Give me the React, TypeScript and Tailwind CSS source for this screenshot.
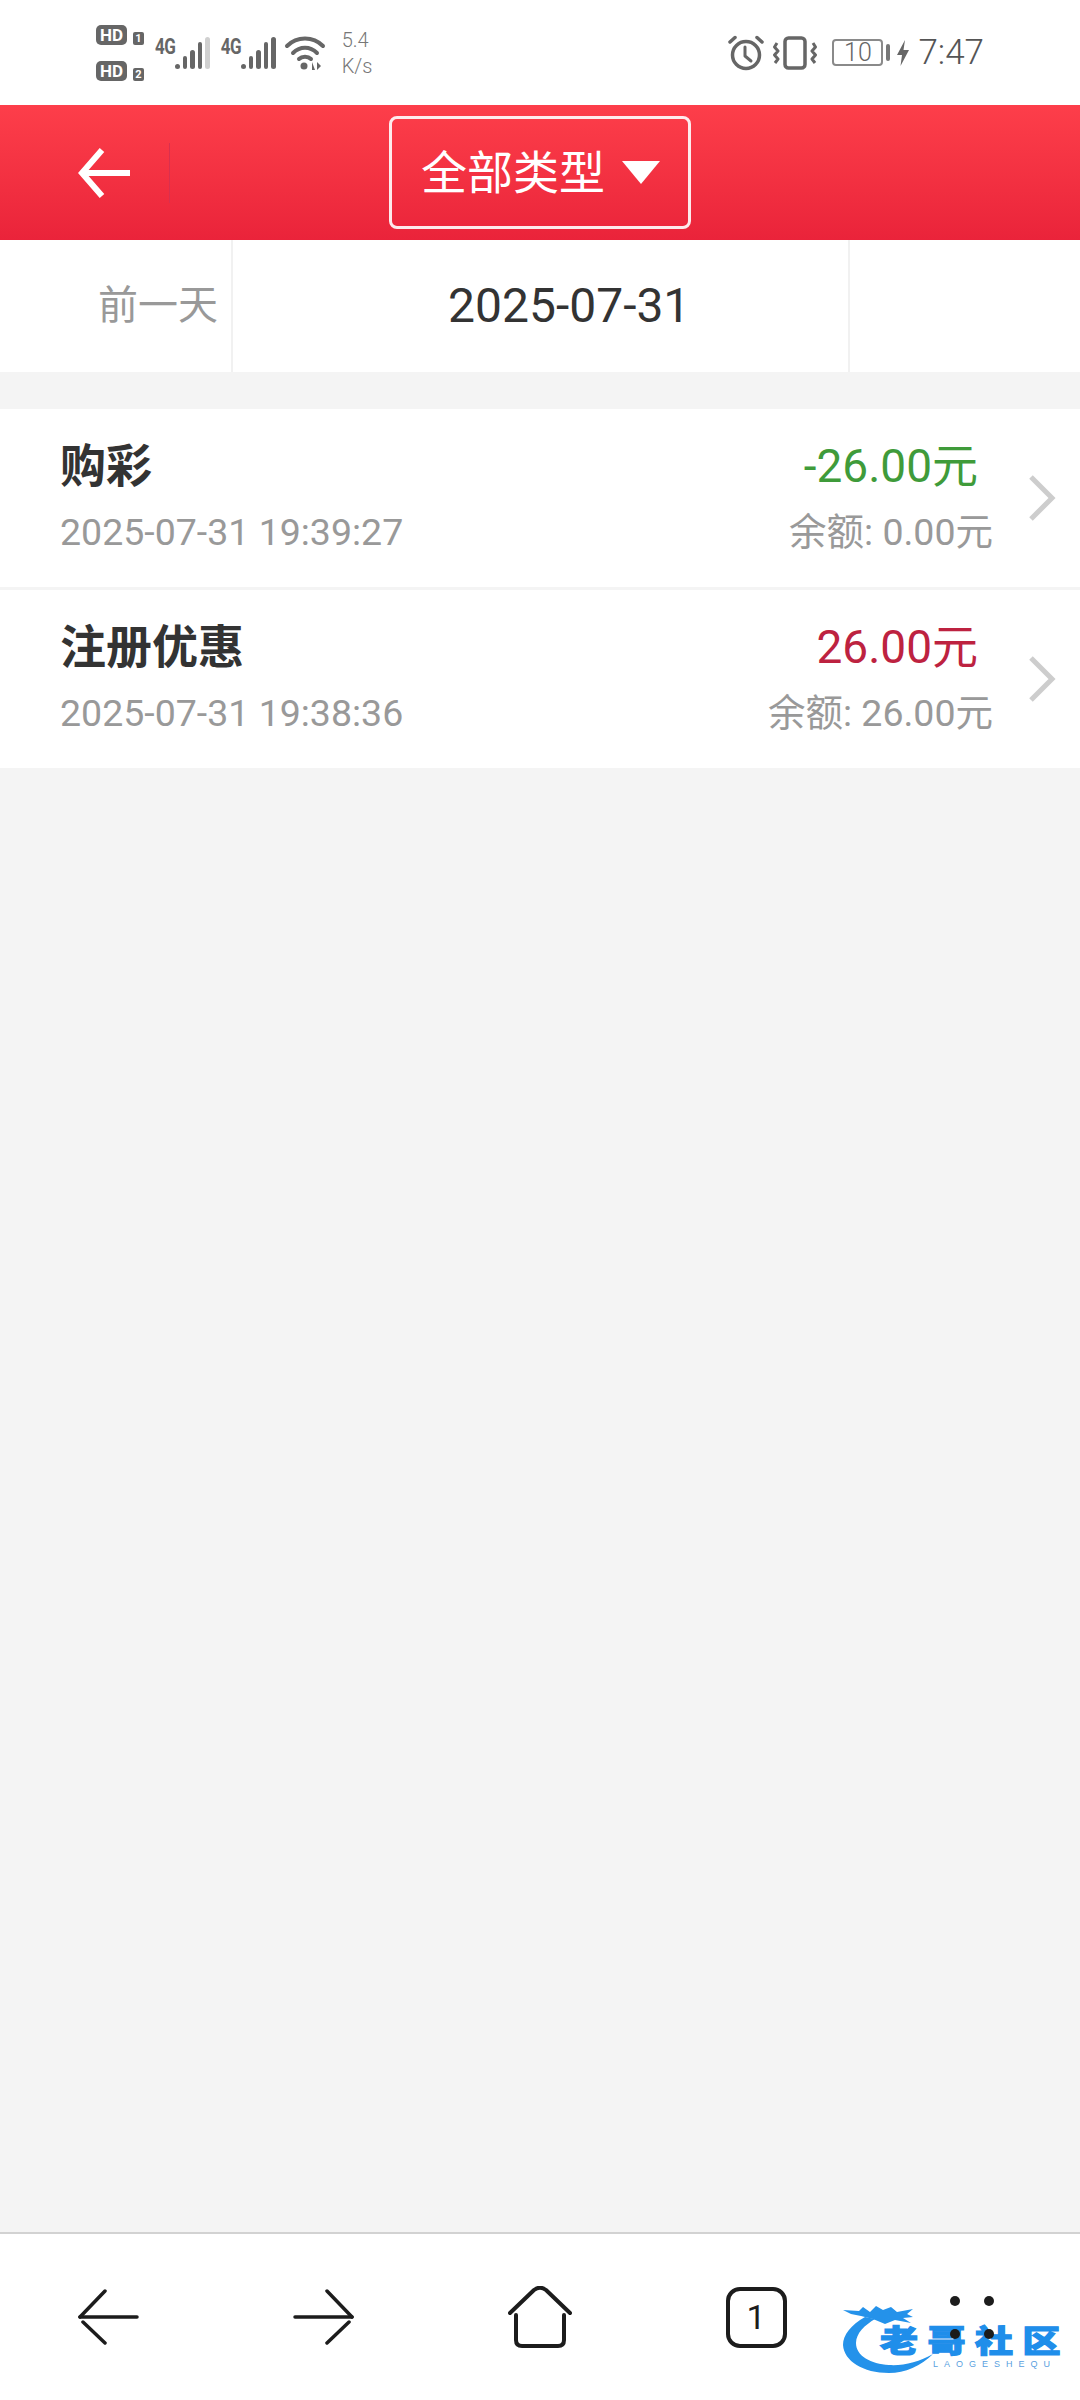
function Signal({ lastGrey }: { lastGrey?: boolean }) {
  const heights = [5, 13, 19, 27, 32];
  return (
    <div className="flex items-start">
      <span className="text-[17px] leading-[17px] font-bold text-[#666] font-['Roboto',sans-serif] tracking-[-0.5px] scale-y-125 origin-top">4G</span>
      <div className="flex items-end gap-[3px] h-[33px]">
        {heights.map((h, i) => (
          <div
            key={i}
            style={{ height: h }}
            className={`w-[4.5px] rounded-full ${lastGrey && i === 4 ? "bg-[#d0d0d0]" : "bg-[#666]"}`}
          />
        ))}
      </div>
    </div>
  );
}

function HdBadge({ n }: { n: string }) {
  return (
    <div className="flex items-end gap-[6px]">
      <div className="w-[31px] h-[20px] rounded-[5px] bg-[#666] text-white text-[17px] leading-[20px] font-bold text-center font-['Roboto',sans-serif]">HD</div>
      <div className="w-[11px] h-[13px] rounded-[2px] bg-[#666] text-white text-[11px] leading-[13px] font-bold text-center font-['Roboto',sans-serif]">{n}</div>
    </div>
  );
}

function StatusBar() {
  return (
    <div className="h-[105px] bg-white flex items-center justify-between pl-[96px] pr-[96px] text-[#666]">
      <div className="flex items-center">
        <div className="flex flex-col gap-[16px]">
          <HdBadge n="1" />
          <HdBadge n="2" />
        </div>
        <div className="ml-[11px]"><Signal lastGrey /></div>
        <div className="ml-[11px]"><Signal /></div>
        <svg className="ml-[8px]" width="42" height="36" viewBox="0 0 42 36" fill="none" stroke="#666" strokeWidth="4" strokeLinecap="round">
          <path d="M3 11 C13 1 29 1 39 11" />
          <path d="M9 18 C16 11 26 11 33 18" />
          <path d="M15 24 C18 21 24 21 27 24" />
          <circle cx="20" cy="31" r="3.5" fill="#666" stroke="none" />
          <path d="M28 27 L28 35 L31 35 Z M33 27 L33 35 L37 31 Z" fill="#666" stroke="none" />
        </svg>
        <div className="ml-[16px] w-[36px] text-[20px] leading-[26px] text-[#777] font-['Roboto',sans-serif] font-light">
          <div>5.4</div>
          <div>K/s</div>
        </div>
      </div>
      <div className="flex items-center">
        <svg width="36" height="36" viewBox="0 0 36 36" fill="none" stroke="#666" strokeWidth="3.5" strokeLinecap="round" strokeLinejoin="round">
          <circle cx="18" cy="20" r="13.5" />
          <path d="M17 12 V21 L23 26" strokeWidth="3" />
          <path d="M2 7 L7 2.5 M34 7 L29 2.5" />
        </svg>
        <svg className="ml-[9px]" width="44" height="34" viewBox="0 0 44 34" fill="none" stroke="#666" strokeLinejoin="round">
          <rect x="12" y="2" width="20" height="30" rx="3.5" strokeWidth="3.5" />
          <path d="M4 7 L1.5 11 L5 15 L1.5 19 L5 23 L2 27 M40 7 L42.5 11 L39 15 L42.5 19 L39 23 L42 27" strokeWidth="3" />
        </svg>
        <div className="ml-[15px] w-[51px] h-[27px] rounded-[4px] border-[2px] border-[#8a8a8a] text-[25px] leading-[24px] text-center font-['Roboto',sans-serif] font-light text-[#666]">10</div>
        <div className="ml-[3px] w-[4px] h-[17px] rounded-[2px] bg-[#777]" />
        <svg className="ml-[7px]" width="12" height="26" viewBox="0 0 12 26" fill="#666">
          <path d="M8 0 L0 15 H5 L3.5 26 L12 10 H6.5 Z" />
        </svg>
        <div className="ml-[9px] text-[35px] leading-[36px] font-['Roboto',sans-serif] font-light text-[#555]">7:47</div>
      </div>
    </div>
  );
}

function Header() {
  return (
    <div className="h-[135px] bg-gradient-to-b from-[#fd3e4a] to-[#ea233a] grid grid-cols-[1fr_auto_1fr] items-center">
      <div className="flex items-center pl-[78px]">
        <svg width="54" height="52" viewBox="0 0 54 52" fill="none" stroke="#fff" strokeWidth="6">
          <path d="M52 26 H6" />
          <path d="M24 3 L4 26 L24 49" />
        </svg>
        <div className="ml-[37px] w-[1px] h-[60px] bg-[#d9304f]" />
      </div>
      <div className="w-[302px] h-[113px] border-[3px] border-white/90 rounded-[8px] flex items-center pl-[29px]">
        <span className="text-[46px] leading-[50px] text-white">全部类型</span>
        <div className="ml-[17px] w-0 h-0 border-l-[19px] border-r-[19px] border-t-[23px] border-l-transparent border-r-transparent border-t-white" />
      </div>
      <div />
    </div>
  );
}

function DateRow() {
  return (
    <div className="h-[132px] bg-white flex">
      <div className="w-[233px] border-r-2 border-[#f1f1f1] flex items-center justify-end pr-[13px] text-[40px] text-[#999]">前一天</div>
      <div className="flex-1 flex items-center pl-[215px] text-[48px] text-[#333]">2025-07-31</div>
      <div className="w-[232px] border-l-2 border-[#f1f1f1]" />
    </div>
  );
}

function Row({ title, time, amount, color, balance }: { title: string; time: string; amount: string; color: string; balance: string }) {
  return (
    <div className="h-[178px] bg-white flex items-center pl-[60px] pr-[24px]">
      <div className="flex-1 pb-[1px]">
        <div className="text-[46px] leading-[56px] font-bold text-[#333]">{title}</div>
        <div className="mt-[13px] text-[37.5px] leading-[50px] text-[#999]">{time}</div>
      </div>
      <div className="flex flex-col items-end pb-[1px]">
        <div className={`mr-[15px] text-[46px] leading-[56px] ${color}`}>{amount}</div>
        <div className="mt-[13px] text-[37.5px] leading-[50px] text-[#999]">{balance}</div>
      </div>
      <svg className="ml-[35px]" width="28" height="46" viewBox="0 0 28 46" fill="none" stroke="#cdcdcd" strokeWidth="5">
        <path d="M3 2 L24 23 L3 44" />
      </svg>
    </div>
  );
}

function BottomBar() {
  return (
    <div className="relative h-[168px] bg-white border-t-2 border-[#d2d2d2] grid grid-cols-5 items-center">
      <div className="flex justify-center">
        <svg width="62" height="56" viewBox="0 0 62 56" fill="none" stroke="#1c1c1c" strokeWidth="3.5" strokeLinecap="round">
          <path d="M3 28 H60" />
          <path d="M28 2 L3 28" />
          <path d="M6 33 L28 54" />
        </svg>
      </div>
      <div className="flex justify-center">
        <svg width="62" height="56" viewBox="0 0 62 56" fill="none" stroke="#1c1c1c" strokeWidth="3.5" strokeLinecap="round">
          <path d="M59 28 H2" />
          <path d="M34 2 L59 28" />
          <path d="M56 33 L34 54" />
        </svg>
      </div>
      <div className="flex justify-center">
        <svg width="64" height="62" viewBox="0 0 64 62" fill="none" stroke="#1c1c1c" strokeWidth="4" strokeLinecap="round" strokeLinejoin="round">
          <path d="M2 27 L26 4 Q32 -0.5 38 4 L62 27" />
          <path d="M8 29 V54 Q8 60 14 60 H50 Q56 60 56 54 V29" />
        </svg>
      </div>
      <div className="flex justify-center">
        <div className="w-[61px] h-[61px] rounded-[14px] border-[4px] border-[#1c1c1c] flex items-center justify-center text-[34px] leading-none text-[#1c1c1c]">1</div>
      </div>
      <div className="relative z-10 flex justify-center">
        <div className="grid grid-cols-2 gap-x-[24px] gap-y-[23px]">
          <span className="w-[10px] h-[10px] rounded-full bg-[#1c1c1c]" />
          <span className="w-[10px] h-[10px] rounded-full bg-[#1c1c1c]" />
          <span className="w-[10px] h-[10px] rounded-full bg-[#1c1c1c]" />
          <span className="w-[10px] h-[10px] rounded-full bg-[#1c1c1c]" />
        </div>
      </div>
      {/* watermark overlays the bar */}
      <div className="absolute left-[843px] top-[69px] w-[222px] h-[72px]">
        <svg className="absolute left-0 top-0" width="222" height="72" viewBox="0 0 222 72" fill="#2492ea">
          <path d="M22 14 C8 22 0 32 0 42 C1 58 20 70 46 70 C62 70 78 63 90 51 C76 59 60 63 46 62 C28 61 13 53 13 40 C13 30 22 22 32 16 Z" />
          <path d="M0 7 L16 8 L20 4 L27 9 L33 3 L40 7 L48 4 L54 9 L70 6 L64 11 L70 14 L60 15 L68 20 L52 17 L42 21 L30 16 L18 13 L8 11 Z" />
        </svg>
        <span className="absolute left-[37px] top-[22px] w-[190px] text-[38px] leading-[36px] font-black tracking-[9.5px] whitespace-nowrap text-[#1f8eea] [-webkit-text-stroke:1.5px_#1f8eea] font-['Noto_Sans_CJK_SC',sans-serif] scale-y-[0.8] origin-top-left">老哥社区</span>
        <span className="absolute left-[90px] top-[56px] text-[9px] leading-[10px] tracking-[6px] text-[#5a9fe0] font-['Liberation_Sans',sans-serif] whitespace-nowrap">LAOGESHEQU</span>
      </div>
    </div>
  );
}

export default function App() {
  return (
    <div className="w-[1080px] h-[2400px] flex flex-col bg-[#f4f4f4] overflow-hidden font-['Roboto','Noto_Sans_CJK_SC',sans-serif]">
      <StatusBar />
      <Header />
      <DateRow />
      <div className="mt-[37px] flex flex-col gap-[3px]">
        <Row title="购彩" time="2025-07-31 19:39:27" amount="-26.00元" color="text-[#3f9b3a]" balance="余额: 0.00元" />
        <Row title="注册优惠" time="2025-07-31 19:38:36" amount="26.00元" color="text-[#bd2240]" balance="余额: 26.00元" />
      </div>
      <div className="flex-1" />
      <BottomBar />
    </div>
  );
}
